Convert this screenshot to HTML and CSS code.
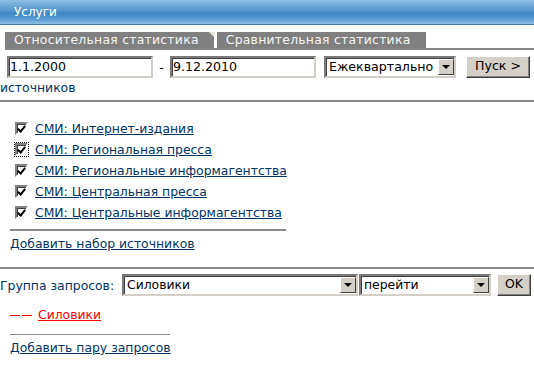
FILE: index.html
```html
<!DOCTYPE html>
<html>
<head>
    <title>Услуги</title>
    <link rel="stylesheet" href="styles.css">
</head>
<body>
<div class="header">Услуги</div>

<div class="tabs">
  <span class="tab tab-active">Относительная статистика</span>
  <span class="tab">Сравнительная статистика</span>
</div>

<div class="period">
  <span class="field field-date">1.1.2000</span>
  <span class="dash">-</span>
  <span class="field field-date">9.12.2010</span>
  <span class="combo combo-period"><span class="combo-text">Ежеквартально</span><span class="combo-btn"></span></span>
  <span class="button button-go">Пуск &gt;</span>
</div>
<a class="stray-link" href="#">источников</a>

<div class="rule"></div>

<ul class="sources">
  <li><span class="check"></span><a href="#">СМИ: Интернет-издания</a></li>
  <li><span class="check check-focus"></span><a href="#">СМИ: Региональная пресса</a></li>
  <li><span class="check"></span><a href="#">СМИ: Региональные информагентства</a></li>
  <li><span class="check"></span><a href="#">СМИ: Центральная пресса</a></li>
  <li><span class="check"></span><a href="#">СМИ: Центральные информагентства</a></li>
</ul>
<div class="rule rule-sources"></div>
<a class="add-link" href="#">Добавить набор источников</a>

<div class="rule rule-group"></div>

<div class="group">
  <span class="group-label">Группа запросов:</span>
  <span class="combo combo-group"><span class="combo-text">Силовики</span><span class="combo-btn"></span></span>
  <span class="combo combo-action"><span class="combo-text">перейти</span><span class="combo-btn"></span></span>
  <span class="button button-ok">OK</span>
</div>

<div class="query"><span class="query-mark"></span><a href="#">Силовики</a></div>
<div class="rule rule-query"></div>
<a class="add-link" href="#">Добавить пару запросов</a>
</body>
</html>
```

FILE: styles.css
```css
html, body {
  margin: 0;
  background: #fff;
  font: 12.4px "DejaVu Sans", sans-serif;
  color: #003366;
  overflow: hidden;
}
a {
  color: #003366;
}

.header {
  height: 24px;
  line-height: 24px;
  padding-left: 14px;
  color: #fff;
  font-size: 12px;
  background: linear-gradient(#8dbde2, #5a9ad0 40%, #3f86c3 55%, #5b9cd3 80%, #8fc0e6);
  border-bottom: 1px solid #3b7ab6;
}

.tabs {
  display: flex;
  margin: 7px 0 0 5px;
  border-bottom: 2px solid #858585;
}
.tab {
  background: #808080;
  color: #f4f4f4;
  height: 16px;
  line-height: 16px;
  padding: 0 15px 0 9px;
  letter-spacing: 0.25px;
}
.tab-active {
  position: relative;
  margin-right: 3px;
}
.tab-active::after {
  content: "";
  position: absolute;
  right: -1px;
  top: 0;
  border-top: 6px solid #e8e8e0;
  border-left: 6px solid transparent;
}

.period {
  display: flex;
  align-items: center;
  margin: 6px 0 0 7px;
  height: 22px;
  font-size: 12.6px;
}
.field {
  box-sizing: border-box;
  height: 22px;
  line-height: 18px;
  padding-left: 1px;
  color: #000;
  background: #fff;
  border: 2px solid;
  border-color: #7a7a7a #d4d0c8 #d4d0c8 #7a7a7a;
  box-shadow: inset 1px 1px 0 #404040;
}
.field-date {
  width: 146px;
}
.dash {
  width: 17px;
  text-align: center;
  color: #000;
}
.combo {
  box-sizing: border-box;
  display: flex;
  height: 22px;
  color: #000;
  background: #fff;
  border: 2px solid;
  border-color: #7a7a7a #d4d0c8 #d4d0c8 #7a7a7a;
  box-shadow: inset 1px 1px 0 #404040;
}
.combo-text {
  flex: 1;
  line-height: 18px;
  padding-left: 3px;
}
.combo-btn {
  box-sizing: border-box;
  width: 16px;
  height: 16px;
  margin: 1px 0;
  background: #d4d0c8;
  border: 1px solid;
  border-color: #fff #404040 #404040 #fff;
  position: relative;
}
.combo-btn::after {
  content: "";
  position: absolute;
  left: 3px;
  top: 5px;
  border-top: 4px solid #000;
  border-left: 4px solid transparent;
  border-right: 4px solid transparent;
}
.combo-period {
  width: 132px;
  margin-left: 8px;
}
.button {
  box-sizing: border-box;
  height: 22px;
  line-height: 18px;
  text-align: center;
  color: #000;
  background: #d4d0c8;
  border: 1px solid;
  border-color: #fff #404040 #404040 #fff;
  box-shadow: inset -1px -1px 0 #808080;
}
.button-go {
  width: 64px;
  margin-left: 10px;
}
.stray-link {
  display: block;
  margin: 2px 0 0 0;
  text-decoration: none;
  line-height: 16px;
}

.rule {
  height: 2px;
  background: #8a8a8a;
  margin-top: 4px;
}

.sources {
  list-style: none;
  margin: 16px 0 0 15px;
  padding: 0;
}
.sources li {
  display: flex;
  align-items: center;
  height: 21px;
}
.sources a {
  margin-left: 7px;
}
.check {
  box-sizing: border-box;
  width: 13px;
  height: 13px;
  border: 2px solid;
  border-color: #808080 #fff #fff #808080;
  background: #fff;
  box-shadow: inset 1px 1px 0 #404040;
  position: relative;
}
.check::after {
  content: "";
  position: absolute;
  left: 2px;
  top: 0;
  width: 3px;
  height: 6px;
  border: solid #000;
  border-width: 0 2px 2px 0;
  transform: rotate(40deg);
}
.check-focus {
  outline: 1px dotted #000;
}
.rule-sources {
  width: 276px;
  margin: 6px 0 0 10px;
}
.add-link {
  display: block;
  margin: 5px 0 0 10px;
  line-height: 16px;
}
.rule-group {
  margin-top: 15px;
}

.group {
  display: flex;
  align-items: center;
  margin-top: 5px;
}
.group-label {
  width: 122px;
}
.combo-group {
  width: 236px;
}
.combo-action {
  width: 132px;
  margin-left: 1px;
}
.button-ok {
  width: 34px;
  margin-left: 6px;
}

.query {
  display: flex;
  align-items: center;
  margin: 11px 0 0 10px;
  line-height: 16px;
}
.query a {
  color: #ff0000;
}
.query-mark {
  width: 22px;
  height: 1px;
  margin-right: 6px;
  background: linear-gradient(90deg, #f00 10px, transparent 10px, transparent 12px, #f00 12px);
}
.rule-query {
  width: 160px;
  height: 1px;
  margin: 11px 0 0 10px;
}
```
